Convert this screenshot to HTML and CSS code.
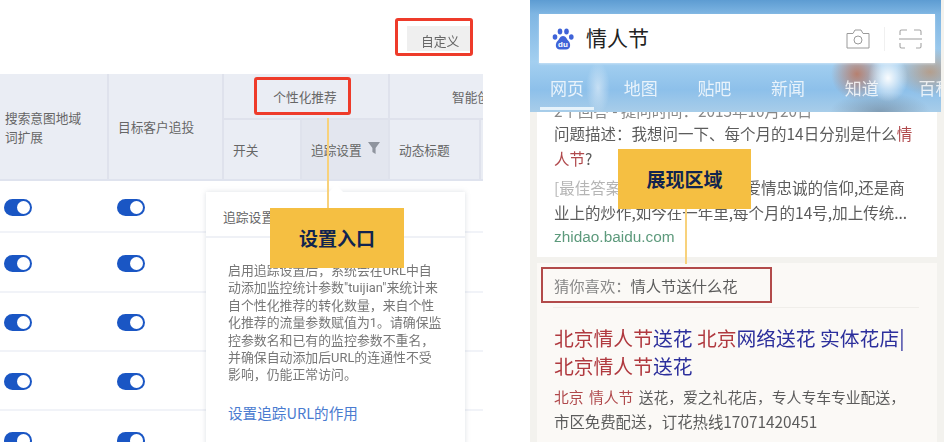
FILE: index.html
```html
<!DOCTYPE html>
<html lang="zh-CN">
<head>
    <meta charset="UTF-8">
    <title>个性化推荐</title>
    <link rel="stylesheet" href="styles.css">
</head>
<body>
<div class="page">
    <section class="left_panel">
        <div class="top_bar">
            <div class="custom_box"><div class="custom_btn">自定义</div></div>
        </div>
        <div class="table_head">
            <div class="head_cell span_rows"><span>搜索意图地域<br>词扩展</span></div>
            <div class="head_cell span_rows col_two">目标客户追投</div>
            <div class="head_cell group_cell span_cols"><span class="group_mark">个性化推荐</span></div>
            <div class="head_cell group_cell clipped_group"><span>智能创</span></div>
            <div class="head_cell sub_cell">开关</div>
            <div class="head_cell sub_cell active_cell">追踪设置
                <svg class="filter_icon" viewBox="0 0 12 12"><path d="M0 0H12L7.600 6V12L4.400 10V6Z"/></svg>
            </div>
            <div class="head_cell sub_cell">动态标题</div>
            <div class="head_cell sub_cell"></div>
        </div>
        <div class="row first_row">
            <div class="toggle_col"><span class="toggle"></span></div>
            <div class="toggle_col"><span class="toggle"></span></div>
        </div>
        <div class="row second_row">
            <div class="toggle_col"><span class="toggle"></span></div>
            <div class="toggle_col"><span class="toggle"></span></div>
        </div>
        <div class="row">
            <div class="toggle_col"><span class="toggle"></span></div>
            <div class="toggle_col"><span class="toggle"></span></div>
        </div>
        <div class="row">
            <div class="toggle_col"><span class="toggle"></span></div>
            <div class="toggle_col"><span class="toggle"></span></div>
        </div>
        <div class="row">
            <div class="toggle_col"><span class="toggle"></span></div>
            <div class="toggle_col"><span class="toggle"></span></div>
        </div>

        <div class="popover">
            <div class="popover_title">追踪设置</div>
            <p class="popover_text">启用追踪设置后，系统会在URL中自<br>动添加监控统计参数"tuijian"来统计来<br>自个性化推荐的转化数量，来自个性<br>化推荐的流量参数赋值为1。请确保监<br>控参数名和已有的监控参数不重名，<br>并确保自动添加后URL的连通性不受<br>影响，仍能正常访问。</p>
            <a class="popover_link">设置追踪URL的作用</a>
        </div>
        <div class="connector left_connector"></div>
        <div class="callout left_callout">设置入口</div>
    </section>

    <section class="right_panel">
        <header class="phone_head">
            <div class="search_bar">
                <svg class="paw" viewBox="0 0 22 22">
                    <ellipse cx="3" cy="9" rx="2.300" ry="2.800" fill="#3f63d8"/>
                    <ellipse cx="8" cy="3.500" rx="2.300" ry="3" fill="#3f63d8"/>
                    <ellipse cx="14.500" cy="3.500" rx="2.300" ry="3" fill="#3f63d8"/>
                    <ellipse cx="19.300" cy="9" rx="2.300" ry="2.800" fill="#3f63d8"/>
                    <path d="M11 8C8 8 7.500 11 5.500 13C3 15.500 3 21.500 8 21.500H14C19 21.500 19 15.500 16.500 13C14.500 11 14 8 11 8Z" fill="#3f63d8"/>
                    <text x="11" y="19" class="paw_text">du</text>
                </svg>
                <span class="search_word">情人节</span>
                <svg class="camera" viewBox="0 0 24 20" fill="none" stroke="#9a9a9a" stroke-width="1">
                    <path d="M1 4.500H7L9 1H15L17 4.500H23V19H1Z"/>
                    <circle cx="12" cy="11" r="4"/>
                </svg>
                <span class="search_divider"></span>
                <svg class="scan" viewBox="0 0 23 20" fill="none" stroke="#a5a5a5" stroke-width="1.100">
                    <path d="M1 6V2.500Q1 1 2.500 1H8M15 1H20.500Q22 1 22 2.500V6"/>
                    <path d="M0 10H23"/>
                    <path d="M1 14V17.500Q1 19 2.500 19H6M17 19H20.500Q22 19 22 17.500V14"/>
                </svg>
            </div>
            <nav class="tabs">
                <span class="tab tab_active">网页</span>
                <span class="tab">地图</span>
                <span class="tab">贴吧</span>
                <span class="tab">新闻</span>
                <span class="tab">知道</span>
                <span class="tab">百科</span>
            </nav>
        </header>
        <div class="result_card">
            <p class="meta_line">2个回答 - 提问时间：2013年10月20日</p>
            <p class="result_line">问题描述：我想问一下、每个月的14日分别是什么<em>情</em></p>
            <p class="result_line"><em>人节</em>?</p>
            <p class="result_line answer_first"><span class="muted">[最佳答案]</span>&nbsp;&nbsp;&nbsp;情人节代表着对爱情忠诚的信仰,还是商</p>
            <p class="result_line">业上的炒作,如今在一年里,每个月的14号,加上传统...</p>
            <p class="result_url">zhidao.baidu.com</p>
        </div>
        <div class="ad_card">
            <div class="guess_box"><span class="guess_label">猜你喜欢：</span>情人节送什么花</div>
            <div class="ad_divider"></div>
            <h3 class="ad_title"><em>北京情人节</em>送花 <em>北京</em>网络送花 实体花店|<br><em>北京情人节</em>送花</h3>
            <p class="ad_text ad_first"><em>北京 情人节</em> 送花，爱之礼花店，专人专车专业配送，</p>
            <p class="ad_text">市区免费配送，订花热线17071420451</p>
        </div>
        <div class="connector right_connector"></div>
        <div class="callout right_callout">展现区域</div>
    </section>
</div>
</body>
</html>
```
FILE: styles.css
```css
*{
    box-sizing: border-box;
}

body{
    margin: 0;
    background-color: white;
    font-family: "Noto Sans CJK SC", "Liberation Sans", sans-serif;
}

p, h3{
    margin: 0;
    font-weight: normal;
}

em{
    font-style: normal;
}

.page{
    display: flex;
    width: 944px;
    height: 442px;
    overflow: hidden;
}

/* left screenshot */
.left_panel{
    position: relative;
    width: 483px;
    height: 442px;
    margin-right: 47px;
    overflow: hidden;
    flex-shrink: 0;
}

.top_bar{
    display: flex;
    justify-content: flex-end;
    height: 74px;
    padding: 18px 10px 0 0;
}

.custom_box{
    width: 78px;
    height: 38px;
    padding: 5px 0 0 9px;
    border: 3px solid #ee3b2a;
    border-radius: 3px;
}

.custom_btn{
    width: 63px;
    height: 25px;
    padding: 5px 0 0 14px;
    background-color: #efefef;
    color: #666;
    font-size: 12.800px;
    line-height: 20px;
    filter: blur(0.3px);
}

.table_head{
    display: grid;
    grid-template-columns: 109px 115px 78px 88px 91px 2px;
    grid-template-rows: 46px 59px;
    background-color: #eaedf4;
    border-bottom: 2px solid #dfe3ee;
    color: #666;
    font-size: 12.700px;
}

.head_cell{
    display: flex;
    align-items: center;
    border-right: 2px solid #dfe2ec;
    line-height: 19px;
}

.span_rows{
    grid-row: span 2;
    padding-left: 5px;
}

.col_two{
    padding-left: 9px;
}

.span_cols{
    grid-column: span 2;
    justify-content: center;
}

.group_cell{
    border-bottom: 2px solid #dfe2ec;
}

.group_mark{
    display: flex;
    align-items: center;
    justify-content: center;
    width: 97px;
    height: 38px;
    margin: 0 0 0 -7px;
    padding-left: 5px;
    border: 3px solid #ee3b2a;
    border-radius: 3px;
}

.clipped_group{
    grid-column: span 2;
    padding-left: 62px;
    white-space: nowrap;
    overflow: hidden;
    border-right: none;
}

.sub_cell{
    padding-left: 9px;
    white-space: nowrap;
}

.active_cell{
    background-color: #e3e6ef;
}

.filter_icon{
    width: 12px;
    height: 12px;
    margin: -3px 0 0 6px;
    fill: #8f949e;
}

.row{
    display: flex;
    align-items: center;
    height: 59px;
    padding-top: 2px;
    border-bottom: 2px solid #f1f3f8;
}

.first_row{
    height: 52px;
}

.second_row{
    height: 60px;
}

.toggle_col{
    width: 113px;
    padding-left: 4px;
}

.toggle{
    display: block;
    position: relative;
    width: 28px;
    height: 17px;
    border-radius: 9px;
    background-color: #1a56c4;
}

.toggle::after{
    content: "";
    position: absolute;
    top: 2px;
    right: 2px;
    width: 13px;
    height: 13px;
    border-radius: 50%;
    background-color: white;
}

.popover{
    position: absolute;
    top: 192px;
    left: 206px;
    width: 259px;
    height: 270px;
    background-color: white;
    box-shadow: 0 0 5px rgba(120, 130, 150, 0.25);
}

.popover::before{
    content: "";
    position: absolute;
    top: -5px;
    left: 125px;
    width: 10px;
    height: 10px;
    background-color: white;
    transform: rotate(45deg);
}

.popover_title{
    height: 46px;
    padding: 15px 0 0 17px;
    border-bottom: 2px solid #eff1f6;
    color: #666;
    font-size: 12.800px;
    line-height: 20px;
}

.popover_text{
    padding: 24px 0 0 22px;
    color: #777;
    font-family: Roboto, "Noto Sans CJK SC", sans-serif;
    font-size: 12.900px;
    line-height: 17.400px;
    white-space: nowrap;
    filter: blur(0.3px);
}

.popover_link{
    display: block;
    margin: 19px 0 0 22px;
    color: #4a7bd0;
    font-size: 14.600px;
    line-height: 20px;
}

.connector{
    position: absolute;
    width: 2px;
    background-color: #f8d27c;
}

.left_connector{
    top: 118px;
    left: 327px;
    height: 90px;
}

.callout{
    position: absolute;
    width: 134px;
    height: 60px;
    background-color: #f5bf42;
    color: #10244f;
    font-size: 19px;
    font-weight: bold;
    line-height: 60px;
    text-align: center;
}

.left_callout{
    top: 208px;
    left: 270px;
}

/* right screenshot */
.right_panel{
    position: relative;
    display: flex;
    flex-direction: column;
    width: 414px;
    height: 442px;
    padding: 0 7px;
    background-color: #f3f2ee;
    overflow: hidden;
    flex-shrink: 0;
}

.phone_head{
    position: relative;
    z-index: 1;
    height: 112px;
    margin: 0 -4px 0 -7px;
    padding: 14px 9px 0;
    overflow: hidden;
    background:
        radial-gradient(ellipse 20px 24px at 358px 78px, rgba(255, 255, 255, 0.95), rgba(255, 255, 255, 0) 100%),
        radial-gradient(ellipse 26px 26px at 327px 74px, rgba(190, 110, 80, 0.8), rgba(190, 110, 80, 0) 100%),
        radial-gradient(ellipse 34px 24px at 400px 72px, rgba(190, 140, 100, 0.7), rgba(190, 140, 100, 0) 100%),
        radial-gradient(ellipse 50px 20px at 350px 112px, rgba(90, 110, 130, 0.5), rgba(90, 110, 130, 0) 100%),
        radial-gradient(ellipse 12px 26px at 68px 88px, rgba(235, 243, 250, 0.6), rgba(235, 243, 250, 0) 100%),
        linear-gradient(to bottom, #5d9cd2 0, #7fb6e3 14px, #a3cff0 62px, #8dc0ea 90px, #a8cde9 112px);
}

.search_bar{
    display: flex;
    align-items: center;
    width: 396px;
    height: 49px;
    padding-left: 13px;
    background-color: white;
    box-shadow: 0 1px 2px rgba(255, 255, 255, 0.4);
}

.paw{
    width: 22px;
    height: 22px;
    margin-right: 12px;
}

.paw_text{
    fill: white;
    font-size: 8px;
    font-weight: bold;
    text-anchor: middle;
    font-family: "Liberation Sans", sans-serif;
}

.search_word{
    width: 260px;
    margin-top: -3px;
    color: #222;
    font-size: 21px;
}

.camera{
    width: 24px;
    height: 20px;
}

.search_divider{
    width: 1px;
    height: 24px;
    margin: 0 14px;
    background-color: #f0f0f0;
}

.scan{
    width: 23px;
    height: 20px;
}

.tabs{
    display: flex;
    gap: 19.700px;
    margin: 12px 0 0 1px;
    white-space: nowrap;
    filter: blur(0.5px);
}

.tab{
    width: 54px;
    height: 35px;
    padding: 0 10px;
    color: rgba(255, 255, 255, 0.8);
    font-size: 17px;
    line-height: 25px;
    flex-shrink: 0;
}

.tab_active{
    border-bottom: 3px solid #e6f3fb;
}

.result_card{
    height: 145px;
    padding: 0 17px;
    background-color: white;
    overflow: hidden;
    color: #5c5c5c;
    filter: blur(0.4px);
}

.meta_line{
    margin-top: -13px;
    color: #888;
    font-size: 15.400px;
    line-height: 22px;
    white-space: nowrap;
}

.result_line{
    font-size: 15.500px;
    line-height: 24.500px;
    white-space: nowrap;
}

.meta_line + .result_line{
    margin-top: 0;
}

.result_line em{
    color: #b0494c;
}

.answer_first{
    margin-top: 5px;
}

.muted{
    color: #b5b5b5;
}

.result_url{
    color: #5d9a7c;
    font-size: 15.400px;
    font-family: "Liberation Sans", sans-serif;
    line-height: 25px;
}

.ad_card{
    flex: 1;
    margin-top: 6px;
    padding: 4px 0 0 4px;
    background-color: #fbf9f6;
    filter: blur(0.4px);
}

.guess_box{
    width: 231px;
    height: 36px;
    padding-left: 11px;
    border: 2px solid #b24a4a;
    color: #5c5c5c;
    font-size: 15.300px;
    line-height: 32px;
    background-color: #fbf9f6;
    white-space: nowrap;
}

.guess_label{
    color: #888;
}

.ad_divider{
    height: 1px;
    margin: 4px 18px 0 12px;
    background-color: #f0eeea;
}

.ad_title{
    margin: 16px 0 0 13px;
    color: #2c2f9c;
    font-size: 19.800px;
    line-height: 28px;
    white-space: nowrap;
}

.ad_title em{
    color: #b0393f;
}

.ad_text{
    margin-left: 13px;
    color: #5c5c5c;
    font-size: 15.400px;
    line-height: 25px;
    white-space: nowrap;
}

.ad_first{
    margin-top: 4px;
    font-size: 14.800px;
    word-spacing: 2px;
}

.ad_text em{
    color: #b0494c;
}

.right_connector{
    top: 209px;
    left: 155px;
    height: 55px;
}

.right_callout{
    top: 149px;
    left: 88px;
    width: 133px;
}
```
